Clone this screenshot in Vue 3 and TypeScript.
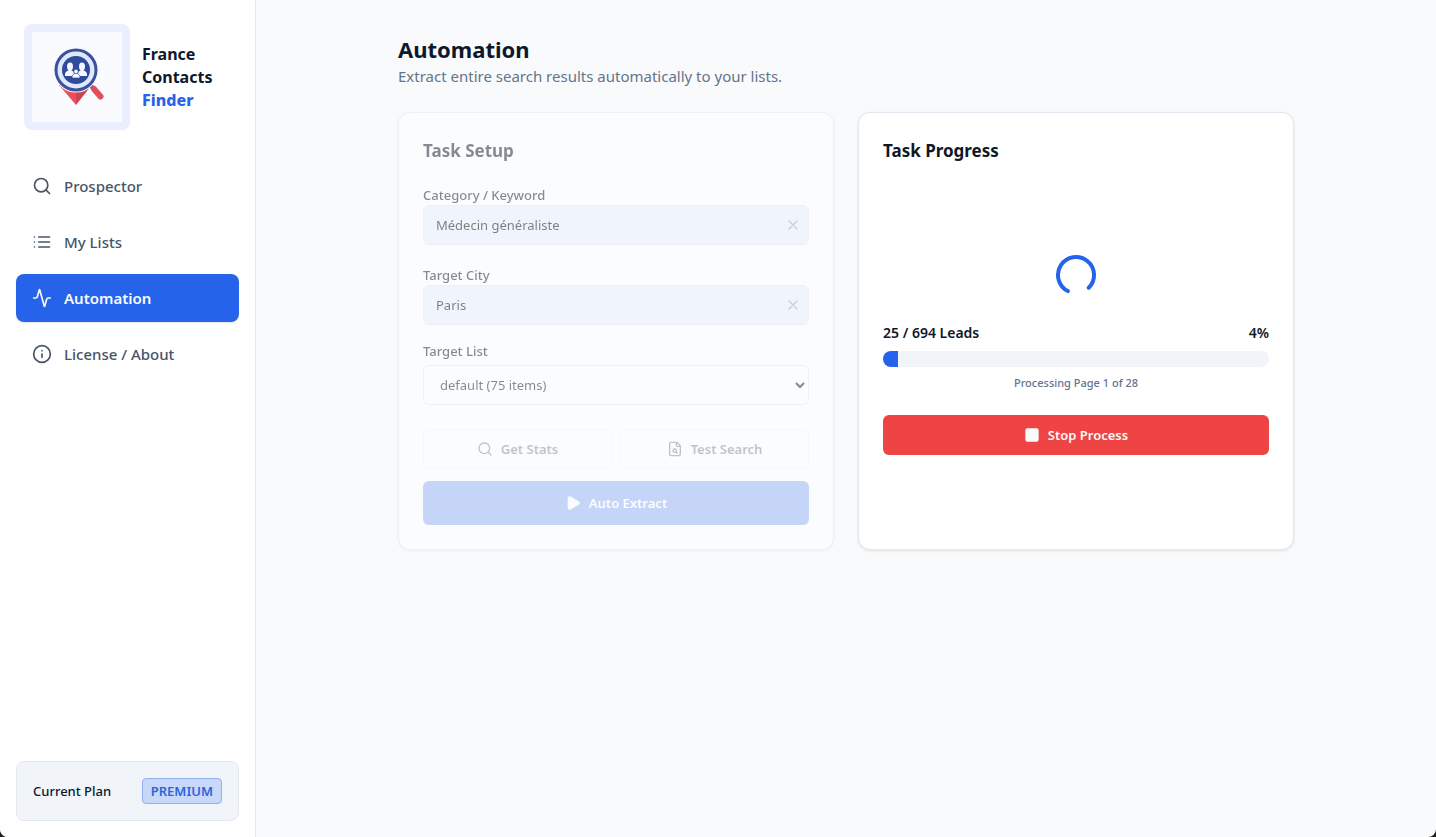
<script setup lang="ts">
import { ref, computed } from 'vue'

interface NavItem {
  label: string
  icon: string
}

const navItems: NavItem[] = [
  { label: 'Prospector', icon: 'search' },
  { label: 'My Lists', icon: 'list' },
  { label: 'Automation', icon: 'activity' },
  { label: 'License / About', icon: 'info' },
]
const activeItem = ref('Automation')

const keyword = ref('Médecin généraliste')
const city = ref('Paris')
const list = ref('default')

const done = ref(25)
const total = ref(694)
const percent = computed(() => Math.round((done.value / total.value) * 100))
</script>

<template>
  <div class="app">
    <aside class="sidebar">
      <div class="brand">
        <div class="brand-tile">
          <svg class="brand-logo" viewBox="0 0 90 90" aria-hidden="true">
            <rect width="90" height="90" fill="#fafbff" />
            <path d="M27 53 L44 73 L44 50 Z" fill="#e8505b" />
            <path d="M44 73 L59 54 L44 50 Z" fill="#cf4350" />
            <path d="M58 53 L62 57" stroke="#3a529c" stroke-width="4" />
            <path d="M62 57 L68.500 64.500" stroke="#e04f5b" stroke-width="6" stroke-linecap="round" />
            <circle cx="44" cy="38" r="20" fill="none" stroke="#fafbff" stroke-width="5" />
            <circle cx="44" cy="38" r="20" fill="#dfe9fb" stroke="#3a529c" stroke-width="3" />
            <circle cx="44" cy="38" r="14" fill="#2f4b9b" />
            <g fill="#f4f7ff">
              <ellipse cx="38" cy="34.500" rx="3" ry="4" />
              <path d="M33 44v-2c0-2 2-3 4-4h2c2 1 3 2 3 4v2z" />
              <ellipse cx="50" cy="34.500" rx="3" ry="4" />
              <path d="M46 44v-2c0-2 1-3 3-4h2c2 1 4 2 4 4v2z" />
              <path d="M40 46c0-3 1-4 4-5 3 1 4 2 4 5z" stroke="#2f4b9b" stroke-width=".6" />
              <circle cx="44" cy="39.500" r="2.200" stroke="#2f4b9b" stroke-width=".6" />
            </g>
          </svg>
        </div>
        <div class="brand-name">France<br />Contacts<br /><span>Finder</span></div>
      </div>

      <nav class="nav">
        <button
          v-for="item in navItems"
          :key="item.label"
          type="button"
          class="nav-item"
          :class="{ active: item.label === activeItem }"
          @click="activeItem = item.label"
        >
          <svg class="icon icon-lg" viewBox="0 0 24 24" aria-hidden="true">
            <template v-if="item.icon === 'search'">
              <circle cx="11" cy="11" r="8" />
              <path d="m21 21-4.300-4.300" />
            </template>
            <path v-else-if="item.icon === 'list'" d="M3 12h.01M3 18h.01M3 6h.01M8 12h13M8 18h13M8 6h13" />
            <path
              v-else-if="item.icon === 'activity'"
              d="M22 12h-2.480a2 2 0 0 0-1.930 1.460l-2.350 8.360a.25.25 0 0 1-.48 0L9.240 2.180a.25.25 0 0 0-.48 0l-2.350 8.360A2 2 0 0 1 4.490 12H2"
            />
            <template v-else>
              <circle cx="12" cy="12" r="10" />
              <path d="M12 16v-4M12 8h.01" />
            </template>
          </svg>
          <span>{{ item.label }}</span>
        </button>
      </nav>

      <div class="plan">
        <span class="plan-label">Current Plan</span>
        <span class="plan-badge">PREMIUM</span>
      </div>
    </aside>

    <main class="main">
      <div class="content">
        <h1>Automation</h1>
        <p class="subtitle">Extract entire search results automatically to your lists.</p>

        <div class="cards">
          <section class="card setup">
            <h2>Task Setup</h2>
            <form @submit.prevent>
              <div class="field">
                <label for="keyword">Category / Keyword</label>
                <div class="input-wrap">
                  <input id="keyword" v-model="keyword" type="text" />
                  <button type="button" class="clear" aria-label="Clear keyword" @click="keyword = ''">
                    <svg class="icon" viewBox="0 0 24 24" aria-hidden="true"><path d="M18 6 6 18M6 6l12 12" /></svg>
                  </button>
                </div>
              </div>
              <div class="field">
                <label for="city">Target City</label>
                <div class="input-wrap">
                  <input id="city" v-model="city" type="text" />
                  <button type="button" class="clear" aria-label="Clear city" @click="city = ''">
                    <svg class="icon" viewBox="0 0 24 24" aria-hidden="true"><path d="M18 6 6 18M6 6l12 12" /></svg>
                  </button>
                </div>
              </div>
              <div class="field field-list">
                <label for="list">Target List</label>
                <select id="list" v-model="list">
                  <option value="default">default (75 items)</option>
                </select>
              </div>
              <div class="actions">
                <button type="button" class="btn btn-outline" disabled>
                  <svg class="icon" viewBox="0 0 24 24" aria-hidden="true">
                    <circle cx="11" cy="11" r="8" />
                    <path d="m21 21-4.300-4.300" />
                  </svg>
                  Get Stats
                </button>
                <button type="button" class="btn btn-outline" disabled>
                  <svg class="icon" viewBox="0 0 24 24" aria-hidden="true">
                    <path d="M15 2H6a2 2 0 0 0-2 2v16a2 2 0 0 0 2 2h12a2 2 0 0 0 2-2V7Z" />
                    <path d="M14 2v4a2 2 0 0 0 2 2h4" />
                    <circle cx="11.500" cy="14.500" r="2.500" />
                    <path d="M13.300 16.300 15 18" />
                  </svg>
                  Test Search
                </button>
              </div>
              <button type="submit" class="btn btn-primary" disabled>
                <svg class="icon solid" viewBox="0 0 24 24" aria-hidden="true">
                  <path d="M5 5a2 2 0 0 1 3.008-1.728l11.997 6.998a2 2 0 0 1 .003 3.458l-12 7A2 2 0 0 1 5 19z" />
                </svg>
                Auto Extract
              </button>
            </form>
          </section>

          <section class="card progress-card">
            <h2>Task Progress</h2>
            <div class="progress-body">
              <svg class="icon spinner" viewBox="0 0 24 24" aria-hidden="true">
                <path d="M21 12a9 9 0 1 1-6.219-8.560" />
              </svg>
              <div class="progress-head">
                <span>{{ done }} / {{ total }} Leads</span>
                <span>{{ percent }}%</span>
              </div>
              <div class="track" role="progressbar" aria-label="Leads" :aria-valuenow="percent">
                <div class="fill" :style="{ width: percent + '%' }"></div>
              </div>
              <p class="status">Processing Page 1 of 28</p>
              <button type="button" class="btn btn-danger">
                <svg class="icon solid" viewBox="0 0 24 24" aria-hidden="true">
                  <rect x="3" y="3" width="18" height="18" rx="2" />
                </svg>
                Stop Process
              </button>
            </div>
          </section>
        </div>
      </div>
    </main>
  </div>
</template>

<style>
body {
  margin: 0;
  background: #1f1f1f;
}
</style>

<style scoped>
.app,
.app * {
  box-sizing: border-box;
}
.app {
  display: flex;
  min-height: 100vh;
  background: #f8fafc;
  border-radius: 0 0 8px 8px;
  overflow: hidden;
  color: #0f172a;
  font-family: 'Segoe UI', 'Noto Sans', 'Open Sans', sans-serif;
  font-size: 13px;
  line-height: 20px;
}
h1,
h2,
p {
  margin: 0;
}
button,
input,
select {
  font: inherit;
  color: inherit;
}
.icon {
  width: 16px;
  height: 16px;
  flex: none;
  fill: none;
  stroke: currentColor;
  stroke-width: 2;
  stroke-linecap: round;
  stroke-linejoin: round;
}
.icon-lg {
  width: 20px;
  height: 20px;
}
.solid {
  fill: currentColor;
}

.sidebar {
  display: flex;
  flex-direction: column;
  flex: none;
  width: 256px;
  background: #fff;
  border-right: 1px solid #e2e8f0;
}
.brand {
  display: flex;
  align-items: center;
  gap: 12px;
  padding: 24px;
}
.brand-tile {
  flex: none;
  padding: 8px;
  border-radius: 8px;
  background: #e9effd;
}
.brand-logo {
  display: block;
  width: 90px;
  height: 90px;
}
.brand-name {
  font-size: 16px;
  font-weight: 700;
  line-height: 23px;
}
.brand-name span {
  color: #2563eb;
  font-weight: 800;
}
.nav {
  display: flex;
  flex: 1;
  flex-direction: column;
  gap: 8px;
  padding: 8px 16px;
}
.nav-item {
  display: flex;
  align-items: center;
  gap: 12px;
  height: 48px;
  padding: 0 16px;
  border: 0;
  border-radius: 8px;
  background: none;
  color: #475569;
  font-size: 15px;
  font-weight: 500;
  text-align: left;
  cursor: pointer;
}
.nav-item.active {
  background: #2563eb;
  color: #f8fafc;
  font-weight: 600;
  box-shadow: 0 1px 2px rgba(0, 0, 0, 0.1);
}
.plan {
  display: flex;
  align-items: center;
  justify-content: space-between;
  height: 60px;
  margin: 16px;
  padding: 0 16px;
  border: 1px solid #e2e8f0;
  border-radius: 8px;
  background: #f1f5f9;
}
.plan-label {
  font-weight: 500;
}
.plan-badge {
  padding: 2px 8px;
  border: 1px solid #93b1f0;
  border-radius: 4px;
  background: #c8d8f9;
  color: #2f63dd;
  font-weight: 600;
}

.main {
  flex: 1;
  padding: 32px;
}
.content {
  max-width: 896px;
  margin: 0 auto;
}
h1 {
  font-size: 22px;
  font-weight: 700;
  line-height: 34px;
}
.subtitle {
  color: #64748b;
  font-size: 15px;
  line-height: 20px;
}
.cards {
  display: grid;
  grid-template-columns: 1fr 1fr;
  gap: 24px;
  margin-top: 26px;
}
.card {
  display: flex;
  flex-direction: column;
  padding: 24px;
  border: 1px solid #e2e8f0;
  border-radius: 12px;
  background: #fff;
  box-shadow: 0 1px 3px rgba(0, 0, 0, 0.1);
}
h2 {
  font-size: 17px;
  font-weight: 700;
  line-height: 28px;
}
.setup {
  opacity: 0.5;
}
.field {
  margin-top: 20px;
}
.field label {
  display: block;
  font-weight: 500;
}
.input-wrap {
  position: relative;
}
.field input,
.field select {
  display: block;
  width: 100%;
  height: 40px;
  padding: 0 12px;
  border: 1px solid #e2e8f0;
  border-radius: 6px;
  background: #fff;
}
.field input {
  padding-right: 36px;
  background: #e8f0fe;
  color: #000;
}
.clear {
  position: absolute;
  top: 0;
  right: 0;
  display: flex;
  align-items: center;
  justify-content: center;
  width: 32px;
  height: 40px;
  padding: 0;
  border: 0;
  background: none;
  color: #94a3b8;
}
.field-list {
  margin-top: 16px;
}
.field-list select {
  margin-top: 4px;
}
.actions {
  display: grid;
  grid-template-columns: 1fr 1fr;
  gap: 8px;
  margin: 24px 0 12px;
}
.btn {
  display: flex;
  align-items: center;
  justify-content: center;
  gap: 8px;
  width: 100%;
  height: 40px;
  padding: 0 16px;
  border: 0;
  border-radius: 6px;
  font-weight: 600;
}
.btn:disabled {
  opacity: 0.5;
}
.btn-outline {
  border: 1px solid #e2e8f0;
  background: #fff;
}
.btn-primary {
  height: 44px;
  background: #2563eb;
  color: #fff;
}
.btn-danger {
  margin-top: 24px;
  background: #ef4444;
  color: #f8fafc;
}

.progress-body {
  display: flex;
  flex: 1;
  flex-direction: column;
  align-items: center;
  justify-content: center;
  margin-top: 16px;
}
.spinner {
  width: 48px;
  height: 48px;
  color: #2563eb;
  transform: rotate(117deg);
}
.progress-head {
  display: flex;
  justify-content: space-between;
  width: 100%;
  margin: 24px 0 8px;
  font-size: 14px;
  font-weight: 600;
}
.track {
  width: 100%;
  height: 16px;
  border-radius: 8px;
  background: #f1f5f9;
  overflow: hidden;
}
.fill {
  height: 100%;
  background: #2563eb;
}
.status {
  margin-top: 8px;
  color: #64748b;
  font-size: 11px;
  font-weight: 500;
  line-height: 16px;
}
</style>
